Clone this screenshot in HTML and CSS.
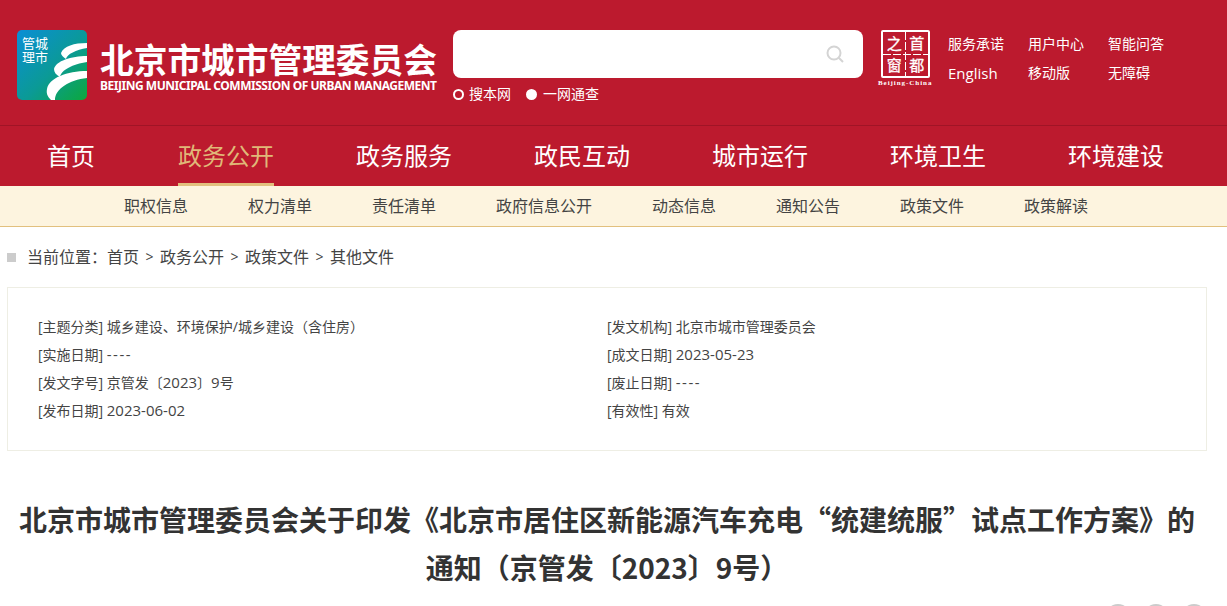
FILE: index.html
```html
<!DOCTYPE html>
<html lang="zh-CN">
<head>
  <meta charset="UTF-8" />
  <meta name="viewport" content="width=device-width, initial-scale=1.0"/>
  <title>北京市城市管理委员会</title>
  <link rel="stylesheet" href="styles.css">
</head>
<body>

  <header class="header">
    <div class="logo">
      <div class="logo-icon">
        <svg width="70" height="70" viewBox="0 0 70 70">
          <defs>
            <linearGradient id="logoBg" x1="0" y1="0" x2="1" y2="1">
              <stop offset="0" stop-color="#0a8ed6"/>
              <stop offset="0.55" stop-color="#0b9a96"/>
              <stop offset="1" stop-color="#0ca83c"/>
            </linearGradient>
          </defs>
          <rect width="70" height="70" rx="5" fill="url(#logoBg)"/>
          <path fill="#fff" d="M70 13C57 13 47 16 44 23C44 25 46 27 49 29C50 24 59 20 70 18Z"/>
          <path fill="#fff" d="M70 26C54 26 39 31 37 39C37 42 39 45 43 47C44 40 56 34 70 32Z"/>
          <path fill="#fff" d="M70 41C50 41 32 48 30 59C29 64 31 67 34 70L38 70C38 59 52 50 70 48Z"/>
        </svg>
        <div class="logo-mark">管城理市</div>
      </div>
      <div class="logo-text">
        <div class="logo-cn">北京市城市管理委员会</div>
        <div class="logo-en">BEIJING MUNICIPAL COMMISSION OF URBAN MANAGEMENT</div>
      </div>
    </div>

    <div class="search">
      <div class="search-box">
        <svg width="20" height="20" viewBox="0 0 20 20" fill="none" stroke="#d4d4d4" stroke-width="2">
          <circle cx="9" cy="9" r="6.5"/>
          <path d="M13.5 13.5L18 18"/>
        </svg>
      </div>
      <div class="search-opts">
        <label class="opt"><span class="radio"></span>搜本网</label>
        <label class="opt"><span class="radio on"></span>一网通查</label>
      </div>
    </div>

    <div class="seal-wrap">
      <div class="seal">
        <span>之</span><span>首</span><span>窗</span><span>都</span>
      </div>
      <div class="seal-en">Beijing-China</div>
    </div>

    <div class="top-links">
      <a>服务承诺</a><a>用户中心</a><a>智能问答</a>
      <a class="en">English</a><a>移动版</a><a>无障碍</a>
    </div>
  </header>

  <nav class="nav">
    <a>首页</a>
    <a class="active">政务公开</a>
    <a>政务服务</a>
    <a>政民互动</a>
    <a>城市运行</a>
    <a>环境卫生</a>
    <a>环境建设</a>
  </nav>

  <div class="subnav">
    <a>职权信息</a>
    <a>权力清单</a>
    <a>责任清单</a>
    <a>政府信息公开</a>
    <a>动态信息</a>
    <a>通知公告</a>
    <a>政策文件</a>
    <a>政策解读</a>
  </div>

  <div class="crumbs">
    <i class="crumb-mark"></i>
    <span>当前位置&#xFF1A;</span>
    <a>首页</a><b>&gt;</b><a>政务公开</a><b>&gt;</b><a>政策文件</a><b>&gt;</b><a>其他文件</a>
  </div>

  <main class="article">
    <div class="meta">
      <div>[主题分类] 城乡建设、环境保护/城乡建设&#xFF08;含住房&#xFF09;</div>
      <div>[发文机构] 北京市城市管理委员会</div>
      <div>[实施日期] <span class="dash">----</span></div>
      <div>[成文日期] <span class="num">2023-05-23</span></div>
      <div>[发文字号] 京管发〔<span class="num">2023</span>〕<span class="num">9</span>号</div>
      <div>[废止日期] <span class="dash">----</span></div>
      <div>[发布日期] <span class="num">2023-06-02</span></div>
      <div>[有效性] 有效</div>
    </div>

    <h1 class="title">北京市城市管理委员会关于印发《北京市居住区新能源汽车充电“统建统服”试点工作方案》的通知&#xFF08;京管发〔2023〕9号&#xFF09;</h1>

    <div class="share">
      <i></i><i></i><i></i>
    </div>
  </main>

</body>
</html>
```

FILE: styles.css
```css
body {
  margin: 0;
  font-family: "Open Sans", "Noto Sans CJK SC", sans-serif;
  background: #fff;
  color: #333;
}

.header {
  height: 125px;
  background: #bc1a2e;
  color: #fff;
  display: flex;
  align-items: flex-start;
  padding: 30px 0 0 17px;
  box-sizing: border-box;
}

.logo {
  display: flex;
  width: 436px;
}

.logo-icon {
  flex: none;
  position: relative;
  width: 70px;
  height: 70px;
}

.logo-icon svg {
  display: block;
}

.logo-mark {
  position: absolute;
  left: 5px;
  top: 6px;
  width: 27px;
  font-size: 13px;
  line-height: 14px;
}

.logo-text {
  margin-left: 13px;
  padding-top: 10px;
  white-space: nowrap;
}

.logo-cn {
  font-size: 33.7px;
  font-weight: bold;
  line-height: 40px;
}

.logo-en {
  font-family: "Noto Sans", sans-serif;
  font-size: 12px;
  font-weight: bold;
  line-height: 16px;
  letter-spacing: -0.47px;
  margin-top: -2px;
}

.search {
  width: 410px;
  margin-right: 18px;
}

.search-box {
  height: 48px;
  background: #fff;
  border-radius: 8px;
  display: flex;
  align-items: center;
  justify-content: flex-end;
  padding-right: 18px;
  box-sizing: border-box;
}

.search-opts {
  display: flex;
  gap: 15px;
  margin-top: 6px;
  font-size: 14px;
  line-height: 20px;
}

.opt {
  display: flex;
  align-items: center;
  gap: 5px;
}

.radio {
  width: 11px;
  height: 11px;
  box-sizing: border-box;
  border: 2px solid #fff;
  border-radius: 50%;
}

.radio.on {
  background: #fff;
  margin-right: 1px;
}

.seal-wrap {
  width: 50px;
  margin-right: 17px;
}

.seal {
  width: 49px;
  height: 48px;
  box-sizing: border-box;
  border: 2px solid #fff;
  border-radius: 2px;
  display: grid;
  grid-template-columns: 1fr 1fr;
  grid-template-rows: 1fr 1fr;
  background:
    repeating-linear-gradient(180deg, #fff 0 8px, transparent 8px 10px) center / 1px 100% no-repeat,
    repeating-linear-gradient(90deg, #fff 0 8px, transparent 8px 10px) center / 100% 1px no-repeat;
}

.seal span {
  font-size: 15px;
  -webkit-text-stroke: 0.3px #fff;
  line-height: 22px;
  text-align: center;
}

.seal-en {
  font-family: "Liberation Serif", serif;
  font-size: 7px;
  font-weight: bold;
  line-height: 8px;
  letter-spacing: 0.95px;
  margin: 1px -3px 0;
  white-space: nowrap;
}

.top-links {
  display: grid;
  grid-template-columns: repeat(3, 80px);
  row-gap: 9px;
  font-size: 14px;
  line-height: 20px;
  margin-top: 4px;
}

.top-links .en {
  font-size: 15px;
}

.nav {
  height: 61px;
  background: #bc1a2e;
  border-top: 1px solid #a01426;
  box-sizing: border-box;
  display: flex;
  gap: 82px;
  padding-left: 47px;
}

.nav a {
  color: #fff;
  font-size: 24px;
  line-height: 60px;
  height: 60px;
  box-sizing: border-box;
}

.nav a:first-child {
  margin-right: 1px;
}

.nav a.active {
  color: #e0b878;
  border-bottom: 3px solid #e2c07e;
}

.subnav {
  height: 41px;
  background: #fdf4df;
  border-bottom: 1px solid #e2c07e;
  box-sizing: border-box;
  display: flex;
  gap: 60px;
  padding-left: 124px;
  font-size: 16px;
  line-height: 40px;
  color: #444;
}

.crumbs {
  display: flex;
  align-items: center;
  font-size: 16px;
  line-height: 22px;
  color: #444;
  padding: 19px 0 19px 7px;
}

.crumb-mark {
  width: 9px;
  height: 9px;
  background: #ccc;
  margin-right: 11px;
}

.crumbs b {
  font-weight: normal;
  font-size: 14px;
  margin: 0 6.5px;
}

.article {
  width: 1200px;
  margin-left: 7px;
}

.meta {
  height: 164px;
  box-sizing: border-box;
  border: 1px solid #eeeee4;
  padding: 25px 0 0 30px;
  display: grid;
  grid-template-columns: 569px 1fr;
  grid-auto-rows: 28px;
  font-size: 14px;
  line-height: 28px;
  color: #444;
}

.num {
  font-size: 15px;
  line-height: 1;
}

.dash {
  font-size: 15px;
  line-height: 1;
  letter-spacing: 1.5px;
}

.title {
  margin: 44px 0 0;
  font-family: "Noto Sans CJK SC", sans-serif;
  text-align: center;
  text-spacing-trim: space-all;
  font-size: 28px;
  line-height: 48px;
  font-weight: bold;
  color: #333;
}

.share {
  display: flex;
  justify-content: flex-end;
  gap: 12px;
  margin-top: 13px;
}

.share i {
  width: 26px;
  height: 26px;
  border-radius: 50%;
  background: #ccc;
}
```
